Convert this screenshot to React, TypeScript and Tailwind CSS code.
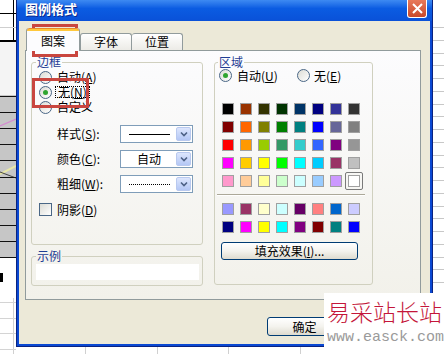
import type { ReactNode } from "react";

const TOP_COLORS = [
  "bg-[#000000]", "bg-[#993300]", "bg-[#333300]", "bg-[#003300]", "bg-[#003366]", "bg-[#000080]", "bg-[#333399]", "bg-[#333333]",
  "bg-[#800000]", "bg-[#ff6600]", "bg-[#808000]", "bg-[#008000]", "bg-[#008080]", "bg-[#0000ff]", "bg-[#666699]", "bg-[#808080]",
  "bg-[#ff0000]", "bg-[#ff9900]", "bg-[#99cc00]", "bg-[#339966]", "bg-[#33cccc]", "bg-[#3366ff]", "bg-[#800080]", "bg-[#969696]",
  "bg-[#ff00ff]", "bg-[#ffcc00]", "bg-[#ffff00]", "bg-[#00ff00]", "bg-[#00ffff]", "bg-[#00ccff]", "bg-[#993366]", "bg-[#c0c0c0]",
  "bg-[#ff99cc]", "bg-[#ffcc99]", "bg-[#ffff99]", "bg-[#ccffcc]", "bg-[#ccffff]", "bg-[#99ccff]", "bg-[#cc99ff]", "bg-[#ffffff]",
];

const CHART_COLORS = [
  "bg-[#9999ff]", "bg-[#993366]", "bg-[#ffffcc]", "bg-[#ccffff]", "bg-[#660066]", "bg-[#ff8080]", "bg-[#0066cc]", "bg-[#ccccff]",
  "bg-[#000080]", "bg-[#ff00ff]", "bg-[#ffff00]", "bg-[#00ffff]", "bg-[#800080]", "bg-[#800000]", "bg-[#008080]", "bg-[#0000ff]",
];

const SHEET_ROWS = Array.from({ length: 26 }, (_, i) => i);

function Key({ label, k }: { label: string; k: string }) {
  return (
    <span className="whitespace-nowrap">
      {label}(<span className="underline">{k}</span>)
    </span>
  );
}

function Radio({ checked }: { checked?: boolean }) {
  return (
    <span className="flex h-[13px] w-[13px] shrink-0 items-center justify-center rounded-full border border-[#4a6786] bg-gradient-to-br from-[#dcdcd5] to-white">
      {checked && <span className="h-[5px] w-[5px] rounded-full bg-[#2fa52f]" />}
    </span>
  );
}

function Combo({ children }: { children: ReactNode }) {
  return (
    <div className="flex h-[18px] w-[73px] items-center border border-[#7f9db9] bg-white p-[1px]">
      <div className="flex flex-1 items-center justify-center">{children}</div>
      <div className="flex h-full w-[15px] items-center justify-center rounded-[2px] border border-[#b9c9ef] bg-gradient-to-b from-[#dde6fd] to-[#b4c7f5]">
        <svg width="8" height="6" viewBox="0 0 8 6">
          <path d="M1 1.5l3 3 3-3" stroke="#4d6185" strokeWidth="1.6" fill="none" />
        </svg>
      </div>
    </div>
  );
}

function XpButton({ className, children }: { className: string; children?: ReactNode }) {
  return (
    <button
      className={`flex items-center justify-center rounded-[3px] border border-[#003c74] bg-gradient-to-b from-white via-[#f4f3ee] to-[#dedbcf] text-[12px] leading-none text-black ${className}`}
    >
      {children}
    </button>
  );
}

function Swatches({ colors, selectedLast }: { colors: string[]; selectedLast?: boolean }) {
  return (
    <div className="grid grid-cols-[repeat(8,18px)] auto-rows-[18px]">
      {colors.map((c, i) => {
        const selected = selectedLast && i === colors.length - 1;
        return (
          <div
            key={i}
            className={`flex items-center justify-center ${selected ? "rounded-[2px] border border-[#7a7a7a]" : ""}`}
          >
            <span className={`h-[12px] w-[12px] border border-[#a0a0a0] ${c}`} />
          </div>
        );
      })}
    </div>
  );
}

function LeftSheet() {
  const blackLines = [96, 112, 128, 144, 160, 177, 193, 209, 225, 241, 257];
  return (
    <svg width="16" height="354" viewBox="0 0 16 354" className="shrink-0">
      <rect width="16" height="354" fill="#fff" />
      <line x1="13.5" y1="0" x2="13.5" y2="41" stroke="#000" />
      <line x1="0" y1="13.5" x2="16" y2="13.5" stroke="#000" />
      <line x1="0" y1="27.5" x2="16" y2="27.5" stroke="#cfcfcf" />
      <rect x="0" y="40" width="16" height="2" fill="#000" />
      <rect x="0" y="42" width="16" height="53" fill="#f4f4f4" />
      <rect x="0" y="95" width="16" height="162" fill="#c6c6c6" />
      {blackLines.map((y) => (
        <line key={y} x1="0" y1={y + 0.5} x2="16" y2={y + 0.5} stroke="#111" />
      ))}
      <line x1="0" y1="126" x2="16" y2="119" stroke="#d58bd0" strokeWidth="1.2" />
      <line x1="0" y1="174" x2="16" y2="166" stroke="#e9e8a6" strokeWidth="2" />
      <line x1="0" y1="172" x2="16" y2="178" stroke="#222" strokeWidth="0.8" />
      <rect x="0" y="273" width="3" height="9" fill="#000" />
      <line x1="13.5" y1="298" x2="13.5" y2="354" stroke="#d0d0d0" />
      {[302, 318, 333, 349].map((y) => (
        <line key={y} x1="0" y1={y + 0.5} x2="16" y2={y + 0.5} stroke="#d4d4d4" />
      ))}
    </svg>
  );
}

export default function App() {
  return (
    <div className="relative h-[354px] w-[444px] overflow-hidden bg-white font-['Noto_Sans_CJK_SC','Noto_Sans',sans-serif] text-black">
      {/* spreadsheet behind the dialog */}
      <div className="flex h-full w-full">
        <LeftSheet />
        <div className="flex flex-1 flex-col justify-end">
          <div className="flex h-[7px]">
            <div className="w-[69px]" />
            <div className="w-[72px] border-l border-[#d0d0d0]" />
            <div className="w-[71px] border-l border-[#d0d0d0]" />
            <div className="w-[72px] border-l border-[#d0d0d0]" />
            <div className="w-[72px] border-l border-[#d0d0d0]" />
            <div className="flex-1 border-l border-[#d0d0d0]" />
          </div>
        </div>
        <div className="flex w-[11px] flex-col">
          <div className="h-[15.25px] shrink-0" />
          {SHEET_ROWS.map((r) => (
            <div key={r} className="h-[12.75px] shrink-0 border-b border-[#c8c8c8]" />
          ))}
        </div>
      </div>

      {/* dialog window */}
      <div className="absolute left-[16px] top-0 flex h-[347px] w-[417px] flex-col border-x border-b border-[#0a2380] bg-[#0a48d2]">
        <div className="flex h-[21px] shrink-0 items-start justify-between bg-gradient-to-b from-[#3d8af2] via-[#0b5ce2] via-40% to-[#0a51d8] pl-[8px] pr-[5px]">
          <span className="text-[13px] font-bold leading-[18px] text-white [text-shadow:1px_1px_#0a2a8c]">图例格式</span>
          <span className="flex h-[18px] w-[20px] items-center justify-center rounded-b-[3px] border-x border-b border-white bg-gradient-to-b from-[#e8795a] to-[#c8482a]">
            <svg width="13" height="13" viewBox="0 0 13 13">
              <path d="M2 2l9 9M11 2l-9 9" stroke="#fff" strokeWidth="2" />
            </svg>
          </span>
        </div>

        <div className="flex flex-1 flex-col px-[2px] pb-[2px]">
          <div className="flex flex-1 flex-col bg-[#ece9d8] pl-[6px] pr-[9px] pt-[7px] text-[12px] leading-[12px]">
            {/* tabs */}
            <div className="flex h-[22px] items-end pl-[1px]">
              <div className="relative z-10 -mb-px flex h-[23px] w-[54px] flex-col rounded-t-[3px] border-x border-[#919b9c] bg-[#fcfcfe]">
                <div className="h-[3px] rounded-t-[3px] border-t border-[#e68b2c] bg-[#ffc83c]" />
                <div className="flex flex-1 items-center justify-center">图案</div>
              </div>
              <div className="flex h-[17px] w-[52px] items-center justify-center rounded-t-[3px] border border-b-0 border-[#919b9c] bg-gradient-to-b from-white to-[#ecebe6]">
                字体
              </div>
              <div className="flex h-[17px] w-[51px] items-center justify-center rounded-t-[3px] border border-b-0 border-l-0 border-[#919b9c] bg-gradient-to-b from-white to-[#ecebe6]">
                位置
              </div>
            </div>

            {/* tab panel */}
            <div className="flex h-[250px] w-[396px] items-start gap-[11px] border border-[#919b9c] bg-gradient-to-b from-[#fcfcfe] to-[#f2f1ea] pl-[5px] pt-[5px]">
              <div className="flex w-[172px] flex-col">
                <fieldset className="h-[189px] w-[172px] rounded-[3px] border border-[#d0d0bf]">
                  <legend className="ml-[4px] px-[1px] leading-[12px] text-[#1f3d94]">边框</legend>
                  <div className="flex flex-col pl-[7px] pt-[2px]">
                    <div className="flex h-[14px] items-center gap-[5px]">
                      <Radio />
                      <Key label="自动" k="A" />
                    </div>
                    <div className="mt-[1px] flex h-[14px] items-center gap-[3px]">
                      <Radio checked />
                      <span className="border border-dotted border-black px-[2px] leading-[10px]">
                        <Key label="无" k="N" />
                      </span>
                    </div>
                    <div className="mt-[1px] flex h-[14px] items-center gap-[5px]">
                      <Radio />
                      <span>自定义</span>
                    </div>

                    <div className="mt-[11px] flex h-[18px] items-center pl-[18px]">
                      <span className="w-[63px]">
                        <Key label="样式" k="S" />:
                      </span>
                      <Combo>
                        <div className="h-px w-[41px] bg-black" />
                      </Combo>
                    </div>
                    <div className="mt-[7px] flex h-[18px] items-center pl-[18px]">
                      <span className="w-[63px]">
                        <Key label="颜色" k="C" />:
                      </span>
                      <Combo>
                        <span>自动</span>
                      </Combo>
                    </div>
                    <div className="mt-[7px] flex h-[18px] items-center pl-[18px]">
                      <span className="w-[63px]">
                        <Key label="粗细" k="W" />:
                      </span>
                      <Combo>
                        <div className="w-[41px] border-t border-dotted border-black" />
                      </Combo>
                    </div>

                    <div className="mt-[10px] flex h-[13px] items-center gap-[5px]">
                      <span className="h-[13px] w-[13px] border border-[#4a6786] bg-gradient-to-br from-[#dcdcd5] to-white" />
                      <Key label="阴影" k="D" />
                    </div>
                  </div>
                </fieldset>

                <fieldset className="mt-[5px] h-[36px] w-[172px] rounded-[3px] border border-[#d0d0bf]">
                  <legend className="ml-[4px] px-[1px] leading-[12px] text-[#1f3d94]">示例</legend>
                  <div className="pl-[4px] pt-[2px]">
                    <div className="h-[16px] w-[163px] bg-white" />
                  </div>
                </fieldset>
              </div>

              <fieldset className="h-[229px] w-[159px] rounded-[3px] border border-[#d0d0bf]">
                <legend className="ml-[3px] px-[1px] leading-[12px] text-[#1f3d94]">区域</legend>
                <div className="flex flex-col pl-[4px] pt-[1px]">
                  <div className="flex h-[13px] items-center">
                    <div className="flex w-[78px] items-center gap-[5px]">
                      <Radio checked />
                      <Key label="自动" k="U" />
                    </div>
                    <div className="flex items-center gap-[4px]">
                      <Radio />
                      <Key label="无" k="E" />
                    </div>
                  </div>
                  <div className="mt-[18px]">
                    <Swatches colors={TOP_COLORS} selectedLast />
                  </div>
                  <div className="-ml-[2px] mt-[4px] w-[148px] border-y border-b-white border-t-[#aca899]" />
                  <div className="mt-[4px]">
                    <Swatches colors={CHART_COLORS} />
                  </div>
                  <XpButton className="ml-[2px] mt-[6px] h-[18px] w-[137px]">
                    <Key label="填充效果" k="I" />...
                  </XpButton>
                </div>
              </fieldset>
            </div>

            {/* dialog buttons; the second one sits under the watermark */}
            <div className="mt-[17px] flex justify-end gap-[6px]">
              <XpButton className="h-[19px] w-[75px]">确定</XpButton>
              <XpButton className="h-[19px] w-[73px]" />
            </div>
          </div>
        </div>
      </div>

      {/* annotation boxes */}
      <div className="absolute left-[32px] top-[24px] h-[33px] w-[46px] border-[3px] border-[#c9463f]" />
      <div className="absolute left-[32px] top-[78px] h-[30px] w-[57px] border-[3px] border-[#c9463f]" />

      {/* watermark */}
      <div className="absolute left-[324px] top-[293px] flex h-[61px] w-[120px] flex-col bg-white pl-[3px] pt-[3px]">
        <span className="text-[23px] font-light leading-[30px] text-[#c4163a]">易采站长站</span>
        <span className="mt-[3px] font-['Liberation_Mono',monospace] text-[15px] leading-[17px] text-[#9a9a9a]">
          www.easck.com
        </span>
      </div>
    </div>
  );
}
